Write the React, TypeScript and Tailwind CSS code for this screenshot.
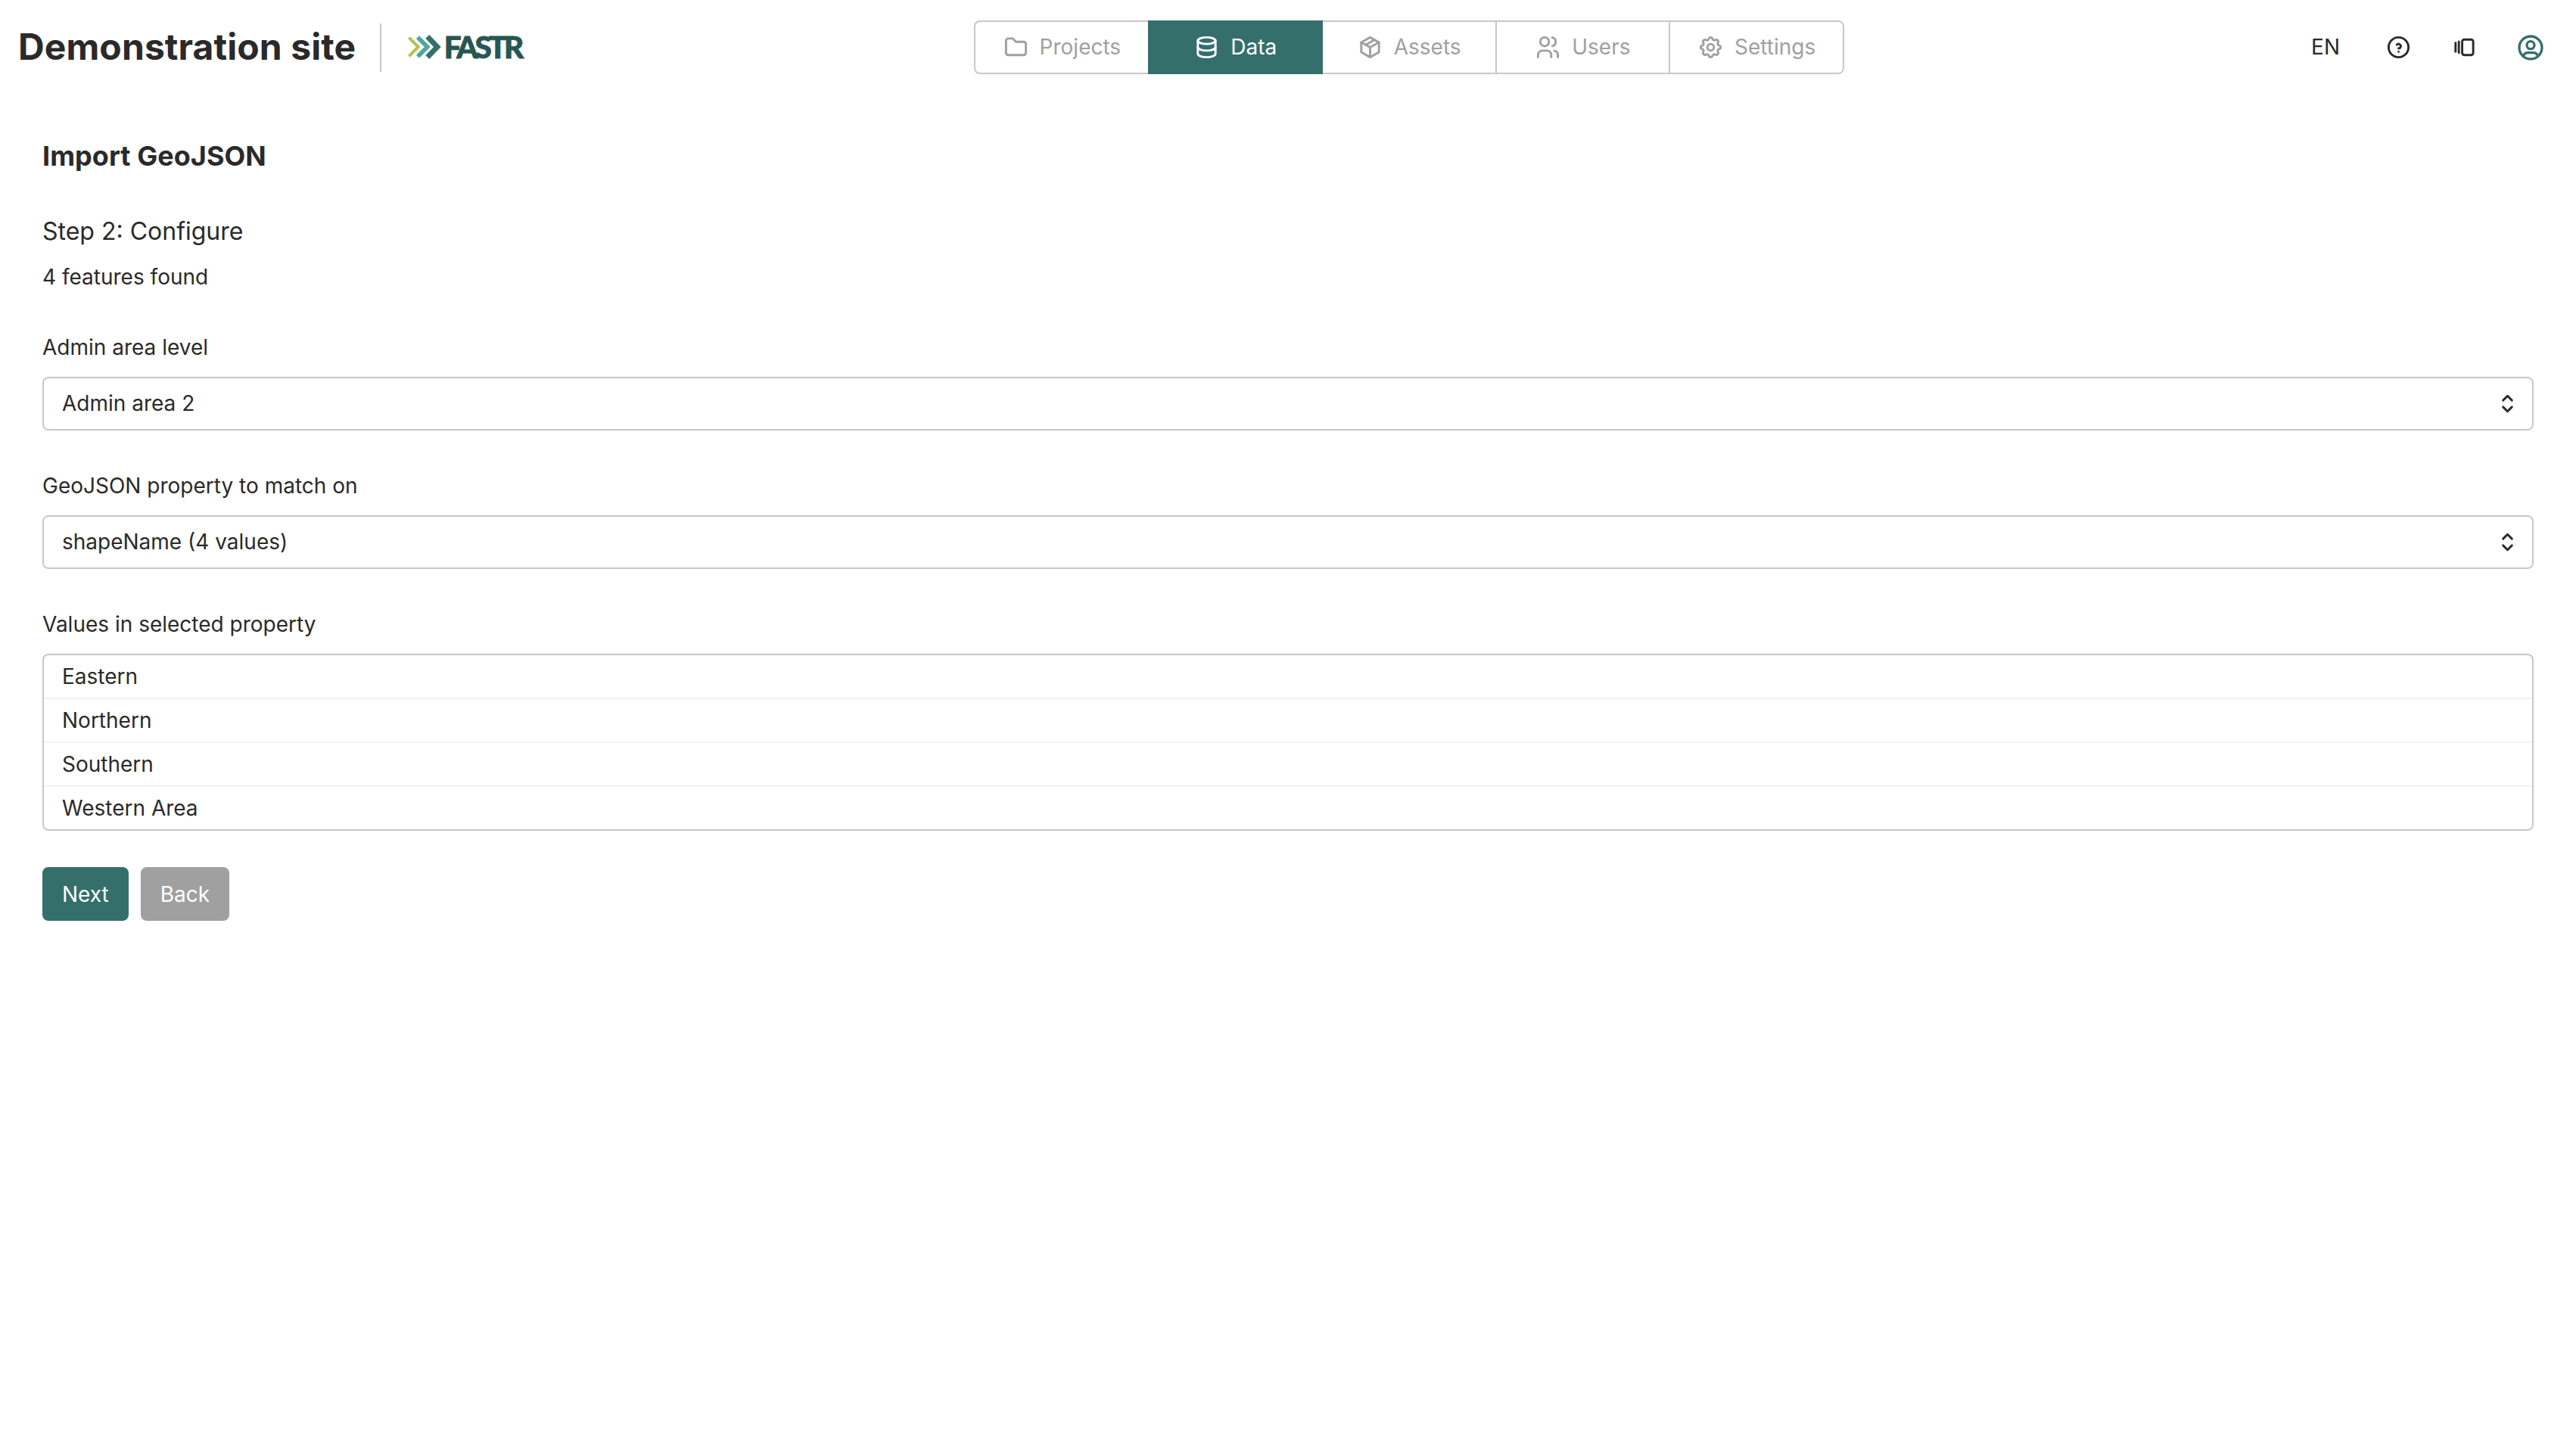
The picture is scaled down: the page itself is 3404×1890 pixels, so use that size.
import { type ReactNode } from "react";
import {
  TbDatabase,
  TbFolder,
  TbHelpCircle,
  TbPackage,
  TbSelector,
  TbSettings,
  TbUserCircle,
  TbUsers,
  TbVersions,
} from "react-icons/tb";
import { type IconType } from "react-icons";

const tabs: { label: string; icon: IconType; active?: boolean }[] = [
  { label: "Projects", icon: TbFolder },
  { label: "Data", icon: TbDatabase, active: true },
  { label: "Assets", icon: TbPackage },
  { label: "Users", icon: TbUsers },
  { label: "Settings", icon: TbSettings },
];

const values = ["Eastern", "Northern", "Southern", "Western Area"];

function Logo() {
  return (
    <svg width="160" height="64" viewBox="0 -14 160 64" className="shrink-0" aria-label="FASTR">
      <path d="M1.4 4.6 L13.7 17 L1.4 29.4" fill="none" stroke="#b3c24b" strokeWidth="4" />
      <path d="M13 4.2 L25.8 17 L13 29.8" fill="none" stroke="#4ca6a0" strokeWidth="5.6" />
      <path d="M25.8 3.3 L38.9 17 L25.8 30.7" fill="none" stroke="#346f6c" strokeWidth="7" />
      <text
        x="47.8"
        y="31.5"
        fontFamily="Lato, sans-serif"
        fontWeight="900"
        fontSize="40.5"
        fill="#285652"
        stroke="#285652"
        strokeWidth="0.8"
        textLength="105.4"
        lengthAdjust="spacing"
      >
        FASTR
      </text>
    </svg>
  );
}

function Header() {
  return (
    <header className="flex h-[125px] items-center pl-6 pr-10">
      <div className="flex w-[1263px] shrink-0 items-center">
        <h1 className="w-[446px] whitespace-nowrap pb-px text-[48px] font-bold leading-[60px] tracking-[0.1px]">
          Demonstration site
        </h1>
        <div className="ml-8 h-16 w-0.5 bg-[#c8c8c8]" />
        <div className="ml-[35px] flex">
          <Logo />
        </div>
      </div>
      <nav className="flex h-[71px] w-[1150px] shrink-0">
        {tabs.map(({ label, icon: Icon, active }) => (
          <button
            key={label}
            className={
              active
                ? "flex w-[231px] items-center justify-center gap-3.5 bg-[#346f6c] text-white"
                : "flex flex-1 items-center justify-center gap-3.5 border-y-2 border-r-2 border-[#c8c8c8] text-[#a0a0a0] first:rounded-l-lg first:border-l-2 first:border-r-0 last:rounded-r-lg"
            }
          >
            <Icon className="size-[35px]" />
            {label}
          </button>
        ))}
      </nav>
      <div className="ml-auto flex items-center">
        <span className="mr-[60px]">EN</span>
        <TbHelpCircle className="mr-[52px] size-[35px]" />
        <TbVersions className="mr-[50px] size-[35px]" />
        <TbUserCircle className="size-10 text-[#346f6c]" />
      </div>
    </header>
  );
}

function Field({ label, children }: { label: string; children: ReactNode }) {
  return (
    <div className="flex flex-col gap-[21px]">
      <label>{label}</label>
      {children}
    </div>
  );
}

function Select({ value }: { value: string }) {
  return (
    <button className="flex h-[71px] items-center justify-between rounded-lg border-2 border-[#c8c8c8] pl-6 pr-[15px] text-left">
      {value}
      <TbSelector className="size-[35px]" />
    </button>
  );
}

export default function App() {
  return (
    <div className="min-h-[1890px] bg-white font-['Inter',sans-serif] text-[28px] leading-[35px] text-[#2a2a2a]">
      <Header />
      <main className="flex flex-col px-14 pt-[59px]">
        <h2 className="text-[36px] font-bold leading-[45px] tracking-[0.05px]">Import GeoJSON</h2>
        <h3 className="mt-[57px] text-[32px] leading-10">Step 2: Configure</h3>
        <p className="mt-[23px]">4 features found</p>
        <div className="mt-[58px] flex flex-col gap-14">
          <Field label="Admin area level">
            <Select value="Admin area 2" />
          </Field>
          <Field label="GeoJSON property to match on">
            <Select value="shapeName (4 values)" />
          </Field>
          <Field label="Values in selected property">
            <ul className="divide-y-2 divide-[#f2f2f2] rounded-lg border-2 border-[#c8c8c8]">
              {values.map((value) => (
                <li key={value} className="px-6 py-2 leading-10">
                  {value}
                </li>
              ))}
            </ul>
          </Field>
        </div>
        <div className="mt-12 flex gap-4">
          <button className="h-[71px] rounded-lg bg-[#346f6c] px-[26px] pt-0.5 text-white">Next</button>
          <button className="h-[71px] rounded-lg bg-[#a0a0a0] px-[26px] pt-0.5 text-white">Back</button>
        </div>
      </main>
    </div>
  );
}
